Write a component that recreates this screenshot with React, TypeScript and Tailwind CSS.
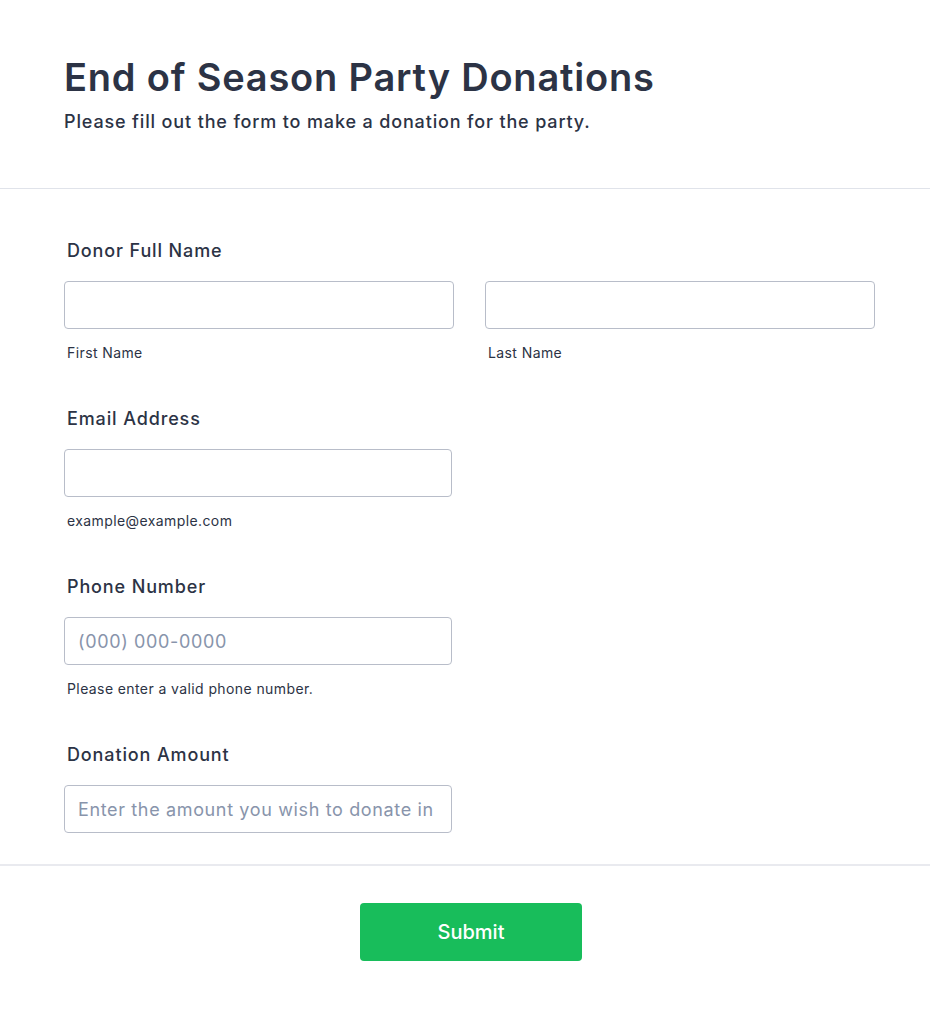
import React from "react";

const font = { fontFamily: "Inter, 'Noto Sans', sans-serif" };

function Label({ children }: { children: React.ReactNode }) {
  return (
    <div className="pl-[3px] text-[18px] font-medium leading-[28px] tracking-[0.87px] text-[#2c3345]">
      {children}
    </div>
  );
}

function Sub({ children }: { children: React.ReactNode }) {
  return (
    <div className="mt-[14px] pl-[3px] text-[14px] leading-[20px] tracking-[0.4px] text-[#2c3345]">
      {children}
    </div>
  );
}

function Field({ placeholder, w = "w-[388px]" }: { placeholder?: string; w?: string }) {
  return (
    <input
      type="text"
      placeholder={placeholder}
      className={`${w} h-[48px] rounded-[4px] border border-[#b8bdc9] bg-white px-[13px] text-[18px] tracking-[0.64px] text-[#2c3345] placeholder:text-[#8894ab] outline-none`}
    />
  );
}

export default function App() {
  return (
    <div
      style={font}
      className="min-h-[1012px] w-[930px] bg-white text-[#2c3345] [font-optical-sizing:none]"
    >
      <header className="px-16 pt-[55px] pb-[52px]">
        <h1 className="text-[38px] font-semibold leading-[44px] tracking-[0.8px]">
          End of Season Party Donations
        </h1>
        <p className="mt-[9px] text-[18px] font-medium leading-[28px] tracking-[0.85px]">
          Please fill out the form to make a donation for the party.
        </p>
      </header>

      <div className="border-t border-[#e0e3ea] px-16 pt-[48px] pb-[31px]">
        <section>
          <Label>Donor Full Name</Label>
          <div className="mt-[16px] grid w-[811px] grid-cols-2 gap-x-[31px]">
            <div>
              <Field w="w-full" />
              <Sub>First Name</Sub>
            </div>
            <div>
              <Field w="w-full" />
              <Sub>Last Name</Sub>
            </div>
          </div>
        </section>

        <section className="mt-[42px]">
          <Label>Email Address</Label>
          <div className="mt-[16px]">
            <Field />
            <Sub>example@example.com</Sub>
          </div>
        </section>

        <section className="mt-[42px]">
          <Label>Phone Number</Label>
          <div className="mt-[16px]">
            <Field placeholder="(000) 000-0000" />
            <Sub>Please enter a valid phone number.</Sub>
          </div>
        </section>

        <section className="mt-[42px]">
          <Label>Donation Amount</Label>
          <div className="mt-[16px]">
            <Field placeholder="Enter the amount you wish to donate in USD" />
          </div>
        </section>
      </div>

      <footer className="flex justify-center border-t-2 border-[#e9eaef] pt-[37px] pb-[51px] pl-[12px]">
        <button
          type="button"
          className="h-[58px] w-[222px] rounded-[4px] bg-[#18bd5b] text-[20px] font-medium text-white"
        >
          Submit
        </button>
      </footer>
    </div>
  );
}
